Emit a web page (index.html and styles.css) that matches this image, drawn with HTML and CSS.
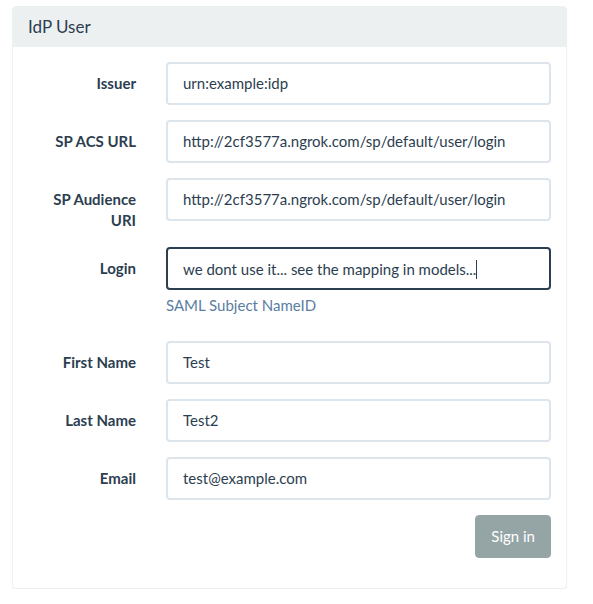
FILE: index.html
```html
<!DOCTYPE html>
<html>
<head>
<meta charset="utf-8">
<link rel="stylesheet" href="styles.css">
</head>
<body>
<div class="panel">
  <div class="panel-heading"><h3 class="panel-title">IdP User</h3></div>
  <div class="panel-body">
    <form class="form">
      <div class="row">
        <label class="label">Issuer</label>
        <div class="field"><input class="input" type="text" value="urn:example:idp"></div>
      </div>
      <div class="row">
        <label class="label">SP ACS URL</label>
        <div class="field"><input class="input" type="text" value="http://2cf3577a.ngrok.com/sp/default/user/login"></div>
      </div>
      <div class="row">
        <label class="label">SP Audience URI</label>
        <div class="field"><input class="input" type="text" value="http://2cf3577a.ngrok.com/sp/default/user/login"></div>
      </div>
      <div class="row">
        <label class="label">Login</label>
        <div class="field">
          <div class="input focused">we dont use it... see the mapping in models...<span class="caret"></span></div>
          <span class="help">SAML Subject NameID</span>
        </div>
      </div>
      <div class="row">
        <label class="label">First Name</label>
        <div class="field"><input class="input" type="text" value="Test"></div>
      </div>
      <div class="row">
        <label class="label">Last Name</label>
        <div class="field"><input class="input" type="text" value="Test2"></div>
      </div>
      <div class="row">
        <label class="label">Email</label>
        <div class="field"><input class="input" type="text" value="test@example.com"></div>
      </div>
      <div class="row actions">
        <button class="btn" type="button">Sign in</button>
      </div>
    </form>
  </div>
</div>
</body>
</html>
```
FILE: styles.css
```css
html, body {
  margin: 0;
  padding: 0;
  background: #fff;
}
body {
  font-family: Lato, "Open Sans", sans-serif;
  font-size: 15px;
  line-height: 1.42857;
  color: #2c3e50;
  padding: 6px 0 0 12px;
}
.panel {
  width: 553px;
  border: 1px solid #ecf0f1;
  border-radius: 4px;
  box-shadow: 0 1px 1px rgba(0,0,0,0.05);
  background: #fff;
}
.panel-heading {
  background: #ecf0f1;
  padding: 11px 15px 9px;
  border-bottom: 1px solid #ecf0f1;
  border-radius: 3px 3px 0 0;
}
.panel-title {
  margin: 0;
  font-size: 17px;
  font-weight: 400;
  line-height: 1.1;
  color: #2c3e50;
}
.panel-body {
  padding: 15px 0;
}
.form {
  margin: 0;
}
.row {
  display: grid;
  grid-template-columns: 138px 1fr;
  margin-bottom: 15px;
}
.label {
  padding: 11px 15px 0;
  text-align: right;
  font-weight: 700;
  color: #2c3e50;
}
.field {
  padding: 0 15px;
  display: flex;
  flex-direction: column;
}
.input {
  box-sizing: border-box;
  display: block;
  width: 100%;
  height: 43px;
  padding: 10px 15px;
  font-family: inherit;
  font-size: 15px;
  line-height: 1.42857;
  color: #2c3e50;
  background: #fff;
  border: 2px solid #dce4ec;
  border-radius: 4px;
  box-shadow: none;
  outline: none;
  margin: 0;
  white-space: nowrap;
}
.input.focused {
  border-color: #2c3e50;
}
.caret {
  display: inline-block;
  width: 1px;
  height: 19px;
  background: #2c3e50;
  vertical-align: -4px;
}
.help {
  display: block;
  margin: 5px 0 10px;
  color: #597ea2;
}
.actions {
  display: flex;
  justify-content: flex-end;
  padding-right: 15px;
  margin-bottom: 15px;
}
.btn {
  font-family: inherit;
  font-size: 15px;
  line-height: 1.42857;
  padding: 10px 15px;
  color: #fff;
  background: #95a5a6;
  border: 1px solid #95a5a6;
  border-radius: 4px;
  cursor: pointer;
}
```
